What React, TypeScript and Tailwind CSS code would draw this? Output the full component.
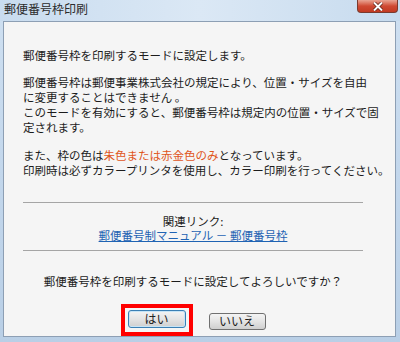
import React from "react";

const font = { fontFamily: '"MS UI Gothic", "Noto Sans CJK JP", sans-serif' };

export default function App() {
  return (
    <div
      className="relative w-[400px] h-[342px] overflow-hidden flex flex-col bg-gradient-to-b from-[#cfe0f1] via-[#c3d7ec] to-[#b9cfe6] text-[#1c1c1c]"
      style={font}
    >
      {/* title bar */}
      <div className="h-[21px] shrink-0 flex items-start pl-[4px] pt-[1px] text-[12px] leading-[16px] text-[#2b2b2b] bg-gradient-to-r from-[#c9dcef] via-[#dbe8f5] to-[#c7dbee]">
        郵便番号枠印刷
      </div>
      {/* close button */}
      <div className="absolute left-[357px] top-0 w-[41px] h-[13px] rounded-b-[4px] border border-t-0 border-[#7a3a2e] bg-gradient-to-b from-[#e8a493] via-[#cf4a33] to-[#c23a22] flex items-center justify-center">
        <svg width="12" height="9" viewBox="0 0 12 9">
          <path d="M2 0.5 L10 8.5 M10 0.5 L2 8.5" stroke="#5a1d12" strokeWidth="3.4" />
          <path d="M2 0.5 L10 8.5 M10 0.5 L2 8.5" stroke="#ffffff" strokeWidth="2" />
        </svg>
      </div>
      {/* client panel */}
      <div className="ml-[3px] mr-[4px] mb-[5px] h-[316px] shrink-0 overflow-hidden border border-[#8d9fb4] bg-[#f5f5f5] flex flex-col text-[11.5px] leading-[15px] whitespace-nowrap">
        <div className="pl-[19px] pt-[26px] h-[41px] shrink-0">郵便番号枠を印刷するモードに設定します。</div>
        <div className="pl-[19px] mt-[12px] h-[60px] shrink-0">
          <div className="h-[15px]">郵便番号枠は郵便事業株式会社の規定により、位置・サイズを自由</div>
          <div className="h-[15px]">に変更することはできません 。</div>
          <div className="h-[15px]">このモードを有効にすると、郵便番号枠は規定内の位置・サイズで固</div>
          <div className="h-[15px]">定されます。</div>
        </div>
        <div className="pl-[19px] mt-[13px] h-[30px] shrink-0">
          <div className="h-[15px]">
            また、枠の色は<span className="text-[#e0561c]">朱色または赤金色のみ</span>となっています。
          </div>
          <div className="h-[15px]">印刷時は必ずカラープリンタを使用し、カラー印刷を行ってください。</div>
        </div>
        <div className="ml-[19px] w-[340px] mt-[24px] h-px shrink-0 bg-[#a5a5a5]" />
        <div className="w-[340px] ml-[19px] mt-[12px] flex flex-col items-center shrink-0">
          <div className="h-[13px] leading-[13px]">関連リンク:</div>
          <div className="h-[14px] leading-[14px] text-[#1f63b3] underline">郵便番号制マニュアル － 郵便番号枠</div>
        </div>
        <div className="ml-[19px] w-[340px] mt-[8px] h-px shrink-0 bg-[#a5a5a5]" />
        <div className="w-[340px] ml-[19px] mt-[23px] h-[15px] shrink-0 text-center">郵便番号枠を印刷するモードに設定してよろしいですか？</div>
        <div className="flex justify-center items-center gap-[16px] mt-[15px] pr-[13px] shrink-0">
          <div className="border-[4px] border-[#ff0000] px-[3px] pt-[2px] pb-[4px]">
            <button className="w-[58px] h-[18px] rounded-[3px] border border-[#3a7fb4] bg-gradient-to-b from-[#f4f4f4] via-[#e4e4e4] to-[#cfcfcf] text-[12px] leading-[14px] flex items-center justify-center shadow-[inset_0_0_0_1px_#c6e4f6]">
              はい
            </button>
          </div>
          <button className="w-[57px] h-[17px] mt-[2px] rounded-[3px] border border-[#707070] bg-gradient-to-b from-[#f4f4f4] via-[#e4e4e4] to-[#cfcfcf] text-[12px] leading-[14px] flex items-center justify-center">
            いいえ
          </button>
        </div>
      </div>
    </div>
  );
}
